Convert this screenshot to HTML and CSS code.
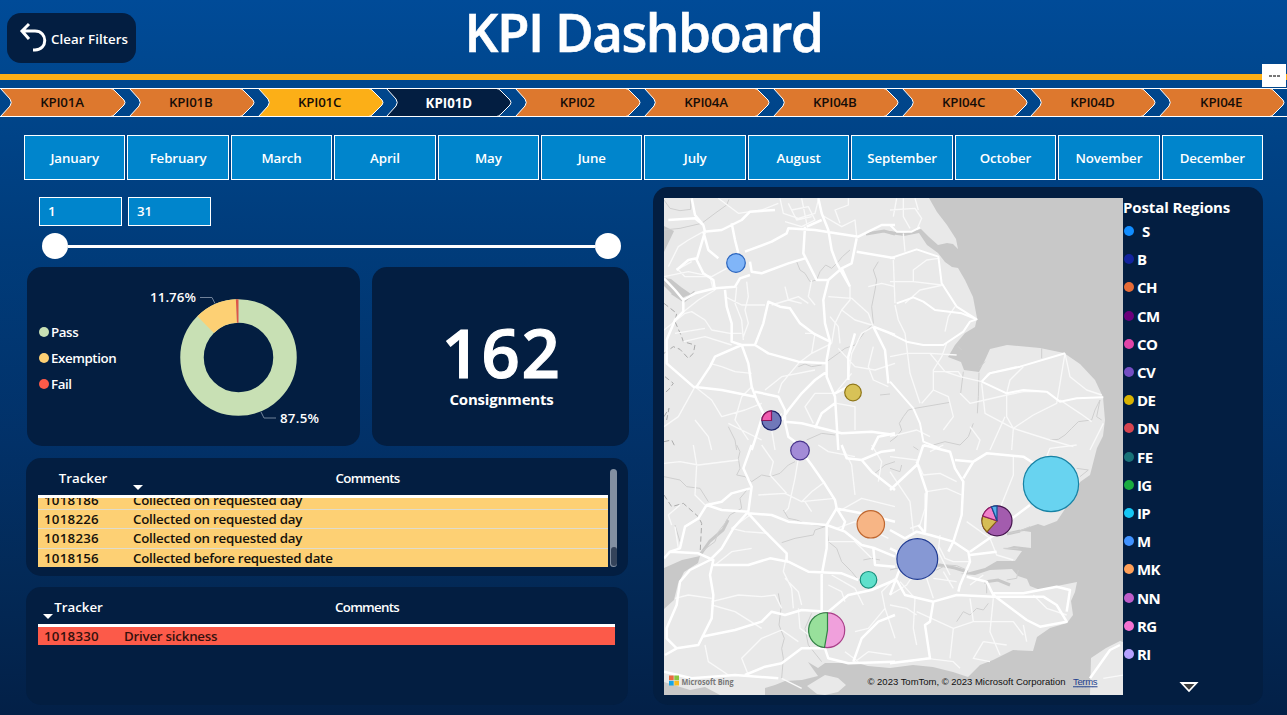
FILE: index.html
```html
<!DOCTYPE html>
<html lang="en">
<head>
<meta charset="utf-8">
<title>KPI Dashboard</title>
<link rel="stylesheet" href="styles.css">
</head>
<body>
<svg class="defs" width="0" height="0"><defs>
<symbol id="chevron" viewBox="0 0 129 29"><path d="M.5 .5H110.500Q113 .5 115 3L124 12Q126 14.500 124 17L115 26Q113 28.500 110.500 28.500H.5L10 18Q12.500 14.500 10 11Z"/></symbol>
</defs></svg>
<header class="top">
  <button class="clear"><svg width="30" height="32" viewBox="0 0 30 32"><path d="M11 2 4 9l7 8M4 9h13c13 0 13 19 0 19h-2" fill="none" stroke="#fff" stroke-width="3"/></svg><span>Clear Filters</span></button>
  <h1>KPI Dashboard</h1>
  <div class="more"><i></i><i></i><i></i></div>
</header>
<nav class="tabs">
  <a><svg><use href="#chevron"/></svg><span>KPI01A</span></a>
  <a><svg><use href="#chevron"/></svg><span>KPI01B</span></a>
  <a class="yellow"><svg><use href="#chevron"/></svg><span>KPI01C</span></a>
  <a class="active"><svg><use href="#chevron"/></svg><span>KPI01D</span></a>
  <a><svg><use href="#chevron"/></svg><span>KPI02</span></a>
  <a><svg><use href="#chevron"/></svg><span>KPI04A</span></a>
  <a><svg><use href="#chevron"/></svg><span>KPI04B</span></a>
  <a><svg><use href="#chevron"/></svg><span>KPI04C</span></a>
  <a><svg><use href="#chevron"/></svg><span>KPI04D</span></a>
  <a><svg><use href="#chevron"/></svg><span>KPI04E</span></a>
</nav>
<div class="months"><span>January</span><span>February</span><span>March</span><span>April</span><span>May</span><span>June</span><span>July</span><span>August</span><span>September</span><span>October</span><span>November</span><span>December</span></div>
<main class="main">
  <section class="left">
    <div class="range"><span>1</span><span>31</span></div>
    <div class="slider"><i></i><b></b><i></i></div>
    <div class="cards">
      <div class="panel donut">
        <ul><li class="pass">Pass</li><li class="exempt">Exemption</li><li class="fail">Fail</li></ul>
        <svg width="236" height="179" viewBox="124 267 236 179">
          <g fill="none" stroke-width="23.500">
            <circle cx="238.500" cy="357.500" r="46.500" stroke="#c8e0b4"/>
            <circle cx="238.500" cy="357.500" r="46.500" stroke="#fdd074" pathLength="100" stroke-dasharray="11.760 88.240" stroke-dashoffset="12.500" transform="rotate(-90 238.500 357.500)"/>
            <circle cx="238.500" cy="357.500" r="46.500" stroke="#dd5548" pathLength="100" stroke-dasharray=".74 99.260" stroke-dashoffset=".74" transform="rotate(-90 238.500 357.500)"/>
          </g>
          <path d="M200 297.500h12l3 6M261 412l3 6h12" fill="none" stroke="#71829a"/>
          <text x="150" y="302" textLength="46">11.76%</text>
          <text x="280" y="423" textLength="39">87.5%</text>
        </svg>
      </div>
      <div class="panel count"><strong>162</strong><span>Consignments</span></div>
    </div>
    <div class="panel table exemptions">
      <div class="head"><span>Tracker</span><svg width="10" height="5"><path d="M0 0h10L5 5z" fill="#fff"/></svg><span>Comments</span></div>
      <div class="body">
        <div><span>1018186</span><span>Collected on requested day</span></div>
        <div><span>1018226</span><span>Collected on requested day</span></div>
        <div><span>1018236</span><span>Collected on requested day</span></div>
        <div><span>1018156</span><span>Collected before requested date</span></div>
      </div>
      <div class="scroll"><i></i></div>
    </div>
    <div class="panel table fails">
      <div class="head"><span>Tracker</span><svg width="10" height="5"><path d="M0 0h10L5 5z" fill="#fff"/></svg><span>Comments</span></div>
      <div class="body"><div><span>1018330</span><span>Driver sickness</span></div></div>
    </div>
  </section>
  <section class="panel mapcard">
    <svg class="map" width="459" height="497" viewBox="664 198 459 497">
      <rect x="664" y="198" width="459" height="497" fill="#c8c8c8"/>
      <!-- land -->
      <path fill="#e9e9e9" d="M664 198H929L937 212 947 225 956 239 958 249 953 244 947 243 938 245 929 237 921 229 912 231 904 233 890 231 890 234 904 236 919 233 927 245 938 253 945 262 952 267 958 268 965 280 973 297 977 318 975 327 965 333 955 345 948 357 961 362 964 370 979 372 985 360 990 349 1007 345 1040 348 1064 353 1080 364 1095 380 1103 397 1105 420 1103 436 1097 448 1090 475 1080 482 1072 498 1063 512 1057 521 1044 526 1038 524 1023 529 1010 533 1024 531 1031 532 1031 548 1014 546 1004 549 1022 551 1015 561 997 561 985 568 970 572 960 574 975 575 990 570 1012 569 1018 576 1027 579 1030 586 1040 590 1057 586 1077 582 1075 592 1071 601 1073 615 1067 623 1050 628 1037 637 1033 651 1013 650 993 660 980 665 968 677 953 672 933 667 913 665 890 668 868 666 857 663 845 663 825 663 818 668 808 662 818 676 802 680 785 681 775 685 765 688 765 695H720L705 687 690 690 664 682V609L674 600 678 584 684 572 698 563 700 556 682 560 664 568V286L672 294 682 298 691 294 681 287 671 279 664 278V252L674 231 664 226Z"/>
      <path fill="#e9e9e9" d="M807 686 825 675 838 678 846 685 838 692 825 695 817 694ZM1090 695 1091 658 1106 648 1120 641 1123 642V695Z"/>
      <path fill="none" stroke="#c8c8c8" stroke-width="3" d="M700 555 710 541 723 530 728 520M866 234 884 231 895 234M672 293 684 301 695 292M1010 585 998 580 984 582M1007 534 1020 531M968 572 955 568 940 565 930 566"/>
      <!-- rivers and borders -->
      <g fill="none" stroke="#cfcfcf" stroke-width="3">
        <g transform="translate(655 190) scale(.33333)">
          <path d="M27 30 45 55 75 62 107 58 108 25M27 120 75 115 140 100 180 70 215 45 222 28M425 215 435 240 450 250 465 275 485 270 495 245 512 225 530 235 550 215 562 200 585 180M670 215 655 240 665 270 660 300 650 350 655 400 630 425 600 465 570 475 550 490 515 515M430 530 450 522 470 530 500 525M675 615 705 612M220 710 240 750 245 780M455 750 500 730 540 735"/>
          <path stroke-dasharray="16 9" stroke="#aaa" d="M27 340 65 370 60 395 80 440 85 455 120 465 115 490 100 505 75 478 55 470 27 490M30 560 55 580 40 600 27 610M27 680 42 655 35 690M27 755 50 750 60 770"/>
        </g>
        <g transform="translate(890 190) scale(.33333)"><path d="M0 755 20 740 35 720 28 700 40 680 55 660 75 655 180 637M220 545 212 610M267 548 265 620 262 670M250 700 235 740 210 765 165 755 130 765M455 475V505M480 750 505 748 525 735 545 715 565 695 605 690 615 660 630 630 620 680 635 690M215 480 205 470M285 515 270 530"/></g>
        <g transform="translate(655 445) scale(.33333)">
          <path d="M27 95 75 105 95 125 135 130 160 170M280 130 255 160 260 190 225 210 210 235 190 260 180 290 140 320M245 0 255 20 250 40 255 70 245 90 270 95 290 110 320 90 345 95 375 85 400 60 420 50M385 195 400 220 425 225 450 235 510 245 480 255 475 270 420 280 380 293M515 245 520 290 545 310 560 350 590 380 610 405M370 445 378 490 372 540 388 580 380 610 385 640 380 700M470 505 450 550 460 600 500 650M625 345 650 340 675 345M60 240 75 290M660 85 690 60 720 50"/>
          <path stroke-dasharray="16 9" stroke="#aaa" d="M27 150 50 185 85 175 130 215 140 235 135 330"/>
        </g>
        <g transform="translate(890 445) scale(.33333)"><path d="M0 70 30 80 35 60M70 5 85 15M560 70 595 75 570 95M0 375 40 365 75 378 110 370 140 375 170 360 200 362 230 375M200 530 220 500 240 510 260 490 280 495 295 475M290 415V445M355 265 385 260 420 245M340 310H385M385 375 380 400 350 405"/></g>
      </g>
      <!-- minor roads -->
      <g fill="none" stroke="#f9f9f9" stroke-width="4" stroke-linejoin="round">
        <g transform="translate(655 190) scale(.33333)"><path d="M375 25 385 70 430 85 480 70 490 30M400 40 425 90 470 80M410 60 460 50 480 90 440 110 390 95M440 25 455 100M500 75 560 110 600 90 605 140M555 100 540 60 580 45 580 25M190 25 250 70 320 60 370 40M40 230 70 170 100 150 145 125M65 240 110 215M27 260 100 245 170 260 215 235M175 300 165 260 90 260 65 235M80 370 130 330 180 300M27 420 90 370 110 365 150 390 170 420 225 430 260 430M60 430 150 415M85 455 150 440 230 465M245 290 240 340 260 390 265 450M275 275 280 320 270 360 280 400 265 440M210 320 260 345 330 345M350 345 400 330 440 340M470 270 460 320 480 345M585 290 585 330 560 360 540 400 530 460M525 380 550 410 555 460M520 320 590 325 640 370 655 410M655 410 620 430 590 490 580 560M590 550 540 610M450 430 480 430 470 490M530 460 470 490 430 520 380 580 370 610M290 550 240 545 200 530 165 520M120 590 70 680 27 710M120 590 170 630 200 680 270 660 320 640M170 780 160 740 120 690M280 750 240 690 260 620 290 590M220 700 320 750M330 600 380 560 480 540M380 670 350 720 360 780M475 700 450 650 480 610 540 610M545 640 600 650 600 720M655 470 640 530 655 570 700 590M550 475 600 530 660 540 720 520M560 360 600 390 650 405M640 290 680 280 720 290M460 340 430 320 400 330 390 290"/></g>
        <g transform="translate(890 190) scale(.33333)"><path d="M0 60 75 55 95 85 80 120M40 25V80L60 115M10 80 20 25M75 25 85 60M40 130 45 185M10 210 15 340M70 275 70 240 110 210 145 205M0 275 70 275 155 285M45 340 90 300 160 285M15 345 25 390 45 430 60 550 90 640M0 500 50 490 120 490 200 495M170 460 155 500 130 540 130 600 95 640M120 490 165 545 210 560 275 575M165 425 175 380 195 350M275 575 295 550 380 530M210 610 240 640 285 630 350 615 400 605 470 605M130 545 205 545 215 560M400 530 360 570 350 610 350 680 370 715M370 715 285 670 275 580M370 715 430 675 500 640 515 550 525 490M300 780 345 680M370 715 480 750 550 770M525 490 540 560 590 600 635 615M510 630 570 670 605 695M600 780 640 700M180 640 190 680 160 720M0 740 80 720 120 740M240 710 270 750 260 780M370 715 365 780M130 600 175 620 180 640"/></g>
        <g transform="translate(655 445) scale(.33333)"><path d="M27 55 75 50 130 60 250 45M115 0 125 60 120 150 150 180M320 0 355 50 345 90 395 145M430 40 420 100 400 190 390 200M310 150 390 145 440 170 540 160M440 170 470 140 510 110M470 200 450 170M600 150 590 60 560 0M550 200 620 160 720 185M490 0 520 20 600 35M285 210 230 250 270 260 340 265M60 245 70 310M75 180 40 210 50 240M180 360 230 320 290 310M395 330 385 380 410 430 415 490M170 470 250 450 320 455 360 450 380 490M170 480 240 500 320 550M60 460 100 450 170 460M430 490 435 550 500 600M380 555 320 580 260 640 280 690M380 555 430 590M380 700 440 730M545 250 600 230 700 280M520 290 600 290 650 340M530 390 600 430 625 480M600 560 640 550 690 490M690 490 680 440 720 400M690 490 720 580M570 620 610 650M600 650 640 620 710 630M650 0 680 50 670 110M520 420 560 440 570 470M150 600 160 650 220 690M440 480 430 440 390 400"/></g>
        <g transform="translate(890 445) scale(.33333)"><path d="M0 35 80 45 100 90 150 85 200 110M0 80 40 140 60 170 70 260M105 145 105 190 90 240 60 250M110 140 170 130 215 150M120 20 160 0M370 30 370 90 350 140 330 190M480 60 440 90 400 100M230 230 300 280 320 330 370 345M145 300 165 340 190 350 240 350M150 270 145 320 180 390M60 350 110 400 130 460M0 450 50 420 90 360M30 410 75 460 70 550 80 600M0 480 50 490 80 510M80 500 190 550 180 640M190 550 250 530 240 460M250 530 370 530 400 570M280 590 250 640 300 650M280 590 350 600M310 460 300 560 330 630M400 540 410 590M430 450 470 490 530 510M240 420 280 390M130 400 200 410M50 650 110 640 190 650 210 670M190 430 160 380M640 700 700 690M460 60 480 10 560 0"/></g>
      </g>
      <!-- motorways -->
      <g fill="none" stroke="#fff" stroke-width="7.500" stroke-linejoin="round">
        <g transform="translate(655 190) scale(.33333)"><path d="M110 25 120 75 145 105 150 125 125 210 145 250 175 270 180 300M40 90 120 85 145 105M145 125 200 120 260 90 285 65 360 60M145 125 160 180 190 205M230 100 240 150 250 190M270 185 350 155 395 130 400 115 480 120 610 140 680 105 720 105M490 25 500 70 520 120 530 180 545 220 585 290M450 110 445 190 485 270 520 270 560 235 590 220 605 145M605 185 720 205M455 110 500 90M285 215 290 245 320 250 400 220 450 205M65 240 100 210 125 205M27 265 60 300 85 330 85 365 60 390 35 450 35 520 115 590 200 600 300 620M85 330 120 310 180 295 240 290 255 265 285 255M210 300 215 350 230 400 230 455 260 465 280 520 290 590 305 630 325 670M125 590 165 530 180 500 260 465 300 465 340 490 430 515 515 520M300 465 325 400 340 335 375 350 405 355 435 400 475 430 525 455 515 510 515 560 540 620 550 780M520 270 505 330 510 400 525 455M515 545 480 570 440 610 400 660 380 690M300 605 370 620 390 660 390 695 440 700 560 730 650 725 720 735M540 610 580 590M325 670 300 750 290 780M655 410 690 480 700 580M655 410 720 435M390 695 400 740 440 770M600 430 580 500 580 570M560 235 585 290M480 715 500 670 540 640M650 780 670 740 720 730"/></g>
        <g transform="translate(890 190) scale(.33333)"><path stroke-width="6" d="M0 105 20 125 65 125 90 112M0 205 80 178 145 200 155 280 200 350 260 388 240 395 220 425 160 465 100 465 50 455 0 430M20 340 70 322 100 335 135 360 215 370 260 388M70 655 90 700 100 755 150 775M0 575 70 655M275 575 350 610M275 575 300 550 390 530 525 490M470 605 510 635 560 625 640 622M470 605 400 600 350 610"/></g>
        <g transform="translate(655 445) scale(.33333)"><path d="M290 0 265 70 290 125 280 200 235 250 200 310 165 345 105 375 75 410 65 480 35 550 35 580 65 610 30 630M65 610 130 600 170 520 175 450 165 390 175 345 130 325 45 320 27 340M175 360 280 360 345 340 400 350 460 380 560 385 610 405M280 205 350 210 400 230 515 240 545 190 540 165 505 110 470 60 440 20M275 200 330 260 395 325 395 350M280 200 200 195 155 180 200 170 230 145 285 130M45 320 75 310 90 245 130 220 155 180M515 240 515 310 500 390 500 500M515 240 570 260 620 300 660 310 720 335M540 190 620 205 720 230M560 0 575 40 620 45 650 80 720 135M140 575 240 555 320 530 350 500 390 510 440 495 520 500 580 450 650 435 720 405M270 690 330 665 380 655 440 610 480 610 510 610 520 640 580 655 720 650M720 510 670 530 620 580 595 650M545 190 570 230 560 260M655 310 660 360 720 365M620 45 680 20 720 15M27 680 110 700 240 690 370 700"/></g>
        <g transform="translate(890 445) scale(.33333)"><path d="M100 0 180 20 195 70 220 110 215 210 190 290 175 320M195 45 250 50 290 25 400 35 440 60M250 50 220 100M100 0 80 60 0 135M80 50 110 140 105 260M0 255 45 280 80 260 120 270 190 290 235 320 240 350 210 420 205 440M240 320 320 265 360 225 420 180M0 450 30 370 20 320 0 310M20 405 45 450 130 470 200 450 310 455 460 455 500 480 530 530 450 545 410 525 350 480 310 450 290 410 230 395M310 445 400 445 500 425 540 435 530 500M130 470 120 530 105 540 120 640 0 655M240 330 320 320M600 700 660 615 690 600M105 265 85 240"/></g>
      </g>
      <!-- bubbles -->
      <g stroke-width="1.200">
        <circle cx="736" cy="263" r="9.300" fill="#80b5f8" stroke="#2863bd"/>
        <circle cx="853" cy="392.500" r="8.300" fill="#d8c257" stroke="#907719"/>
        <circle cx="800" cy="450.500" r="9.300" fill="#a38bd7" stroke="#46328b"/>
        <circle cx="771.500" cy="420.500" r="9.600" fill="#7078b9" stroke="#1a226a"/>
        <path d="M771.500 420.500V410.900A9.600 9.600 0 0 0 761.900 420.500Z" fill="#f05caf" stroke="#8b175c"/>
        <circle cx="870.800" cy="524.300" r="13.700" fill="#f7b585" stroke="#bf6730"/>
        <circle cx="917.300" cy="559" r="20.400" fill="#8698d4" stroke="#213c93"/>
        <circle cx="868.500" cy="579.800" r="8.300" fill="#5fe0cb" stroke="#168d7a"/>
        <circle cx="1051" cy="484" r="27.600" fill="#68d3f0" stroke="#1782a4"/>
        <circle cx="827.300" cy="630.200" r="17.400" fill="#f0a0dc" stroke="#aa4089"/>
        <path d="M827.500 630.200V612.800A17.400 17.400 0 0 0 824.500 647.500Z" fill="#98e09b" stroke="#328346"/>
        <circle cx="997" cy="520.800" r="15" fill="#a35cae" stroke="#42134b"/>
        <path d="M997 520.800 982.800 516A15 15 0 0 0 987 532Z" fill="#d5bd56" stroke="#845b12"/>
        <path d="M997 520.800 991.500 506.800A15 15 0 0 0 982.800 516Z" fill="#f080cb" stroke="#941c67"/>
        <path d="M997 520.800V505.800A15 15 0 0 0 991.500 506.800Z" fill="#56aee9" stroke="#174b91"/>
      </g>
      <path d="M669 675.500h4.700v4.700H669z" fill="#e96b3f"/><path d="M674.300 675.500h4.700v4.700h-4.700z" fill="#8ac43f"/><path d="M669 680.800h4.700v4.700H669z" fill="#16a5e5"/><path d="M674.300 680.800h4.700v4.700h-4.700z" fill="#f7bb20"/>
      <text class="bing" x="681.500" y="684.500" textLength="52" lengthAdjust="spacingAndGlyphs">Microsoft Bing</text>
      <text class="credit" x="867.500" y="685.300" textLength="198">© 2023 TomTom, © 2023 Microsoft Corporation</text>
      <text class="credit terms" x="1073" y="685.300" textLength="24.500">Terms</text>
    </svg>
    <div class="regions">
      <h2>Postal Regions</h2>
      <ul>
        <li class="r-s">S</li><li class="r-b">B</li><li class="r-ch">CH</li><li class="r-cm">CM</li><li class="r-co">CO</li><li class="r-cv">CV</li><li class="r-de">DE</li><li class="r-dn">DN</li><li class="r-fe">FE</li><li class="r-ig">IG</li><li class="r-ip">IP</li><li class="r-m">M</li><li class="r-mk">MK</li><li class="r-nn">NN</li><li class="r-rg">RG</li><li class="r-ri">RI</li>
      </ul>
      <svg class="down" width="20" height="11" viewBox="0 0 20 11"><path d="M2.500 1h15L10 9z" fill="#3b3b3b" stroke="#fff" stroke-width="1.800"/></svg>
    </div>
  </section>
</main>
</body>
</html>
```

FILE: styles.css
```css
* { box-sizing: border-box; }
body { margin: 0; width: 1287px; height: 715px; overflow: hidden; color: #fff; font: 600 13.3px/18px "Trebuchet MS", "Open Sans", sans-serif; background: linear-gradient(#004b98 0, #00468c 13%, #003c7b 34%, #023168 62%, #032a58 80%, #032047 100%); }
ul { list-style: none; margin: 0; padding: 0; }
.defs { display: block; position: absolute; }
.top { position: relative; height: 80px; border-bottom: 6px solid #fcaf17; padding: 0 7px; display: grid; grid-template-columns: 129px 1fr 129px; }
.clear { height: 50px; margin-top: 13px; border: 0; border-radius: 14px; background: #031e41; color: #fff; font: inherit; padding: 0 0 0 11px; display: flex; align-items: center; gap: 3px; letter-spacing: .05px; white-space: nowrap; }
.clear span { padding-top: 2px; }
h1 { margin: -5px 0 0; text-align: center; font: 600 53px/74px "Trebuchet MS", "Open Sans", sans-serif; letter-spacing: -1.5px; -webkit-text-stroke: .6px #fff; }
.more { position: absolute; z-index: 2; right: 1px; top: 64px; width: 24px; height: 23px; background: #fff; display: flex; align-items: center; justify-content: center; gap: 1px; }
.more i { width: 3px; height: 2px; background: #777; }
.tabs { margin-top: 8px; height: 29px; border-top: 1px solid #fff; border-bottom: 1px solid #fff; display: grid; grid-template-columns: repeat(10, 128.8px); overflow: hidden; }
.tabs a { display: grid; color: #160d08; height: 27px; }
.tabs svg, .tabs span { grid-area: 1 / 1; }
.tabs svg { width: 129px; height: 29px; margin-top: -1px; fill: #dd782e; stroke: #fff; stroke-width: 1; }
.tabs span { width: 124px; text-align: center; line-height: 27px; letter-spacing: -.2px; }
.tabs .yellow svg { fill: #fcaf17; }
.tabs .active svg { fill: #031e41; }
.tabs .active { color: #fff; font-weight: 700; }
.tabs .active span { letter-spacing: 0; width: 125px; line-height: 28px; }
.months { margin: 18px 24px 0; height: 45px; display: grid; grid-template-columns: repeat(12, 1fr); gap: 2px; }
.months span { border: 1px solid #fff; background: #0085cc; text-align: center; line-height: 45px; letter-spacing: -.1px; height: 45px; }
.main { display: grid; grid-template-columns: 603px 610px; gap: 24px; padding: 7px 24px 0 26px; }
.panel { background: #031e41; border-radius: 15px; }
.range { display: flex; gap: 6px; padding: 10px 0 0 13px; }
.range span { width: 83px; height: 29px; border: 1px solid #fff; background: #0085cc; padding-left: 8px; line-height: 27px; }
.slider { display: flex; align-items: center; margin: 7px 8px 0 16px; height: 26px; }
.slider i { width: 26px; height: 26px; border-radius: 50%; background: #fff; }
.slider b { flex: 1; height: 3px; background: #fff; }
.cards { display: grid; grid-template-columns: 333px 257px; gap: 12px; padding: 8px 0 0 1px; height: 187px; }
.donut { display: flex; justify-content: space-between; }
.donut ul { padding: 52px 0 0 12px; }
.donut li { display: flex; align-items: center; gap: 2px; height: 26px; letter-spacing: -.4px; white-space: nowrap; width: 80px; }
.donut li::before { content: ""; width: 10px; height: 10px; border-radius: 50%; flex: none; }
.donut .pass::before { background: #c8e0b4; } .donut .exempt::before { background: #fdd074; } .donut .fail::before { background: #fc5a49; }
.donut text { fill: #fff; font-size: 13.3px; }
.count { display: flex; flex-direction: column; align-items: center; font-weight: 700; padding: 38px 0 0 2px; }
.count strong { font-size: 67px; font-weight: 600; line-height: 94px; letter-spacing: 1.500px; height: 85px; -webkit-text-stroke: 1.200px #fff; }
.count span { font-size: 15px; letter-spacing: -.2px; }
.table { width: 602px; height: 118px; margin-top: 12px; padding-left: 12px; position: relative; }
.fails { margin-top: 11px; }
.head { height: 37px; width: 570px; border-bottom: 3px solid #fff; display: grid; grid-template-columns: 90px 480px; box-sizing: content-box; }
.head span { text-align: center; line-height: 40px; }
.head span:last-child { grid-column: 2; letter-spacing: -.75px; padding-right: 1px; }
.head svg { position: absolute; left: 107px; top: 27px; }
.fails .head { width: 577px; grid-template-columns: 81px 497px; }
.fails .head svg { left: 17px; }
.body { width: 570px; height: 69px; overflow: hidden; color: #15110a; display: flex; flex-direction: column; justify-content: flex-end; background: #fdd074; }
.body div { flex: 0 0 19.3px; display: grid; grid-template-columns: 89px 1fr; padding-left: 6px; border-top: 1px solid #dfdccd; line-height: 18px; }
.body span { letter-spacing: -.22px; }
.body span:first-child { letter-spacing: .25px; }
.fails .body { width: 577px; height: 18px; background: #fc5a49; }
.fails .body div { border: 0; flex-basis: 18px; grid-template-columns: 80px 1fr; color: #35110d; }
.scroll { position: absolute; right: 11px; top: 11px; width: 7px; height: 98px; border-radius: 4px; background: #8390a2; display: flex; align-items: flex-end; }
.scroll i { width: 6px; height: 19px; margin: 0 0 1px 1px; border-radius: 3px; background: #34435a; }
.mapcard { height: 518px; padding: 11px 0 0 11px; display: flex; }
.map { display: block; }
.bing { font: 700 9px "Open Sans", sans-serif; fill: #777; }
.credit { font: 9.500px "Liberation Sans", Arial, sans-serif; fill: #111; }
.terms { fill: #1d3f8d; text-decoration: underline; }
.regions { width: 140px; margin-top: -1px; font-weight: 700; font-size: 15px; }
h2 { font: inherit; margin: 0; line-height: 20px; letter-spacing: -.1px; white-space: nowrap; }
.regions li { display: flex; align-items: center; gap: 3px; height: 28.2px; padding-left: 1px; letter-spacing: -.6px; }
.regions li::before { content: ""; width: 10px; height: 10px; border-radius: 50%; background: var(--dot); }
.regions .r-s { gap: 8px; }
.down { display: block; margin: 14px 0 0 56px; }
.r-s { --dot: #118dff; } .r-b { --dot: #12239e; } .r-ch { --dot: #e66c37; } .r-cm { --dot: #6b007b; } .r-co { --dot: #e044a7; } .r-cv { --dot: #744ec2; } .r-de { --dot: #d9b300; } .r-dn { --dot: #d64550; } .r-fe { --dot: #197278; } .r-ig { --dot: #1aab40; } .r-ip { --dot: #15c6f4; } .r-m { --dot: #4092ff; } .r-mk { --dot: #ffa058; } .r-nn { --dot: #be5dc9; } .r-rg { --dot: #f472d0; } .r-ri { --dot: #b5a1ff; }
```
